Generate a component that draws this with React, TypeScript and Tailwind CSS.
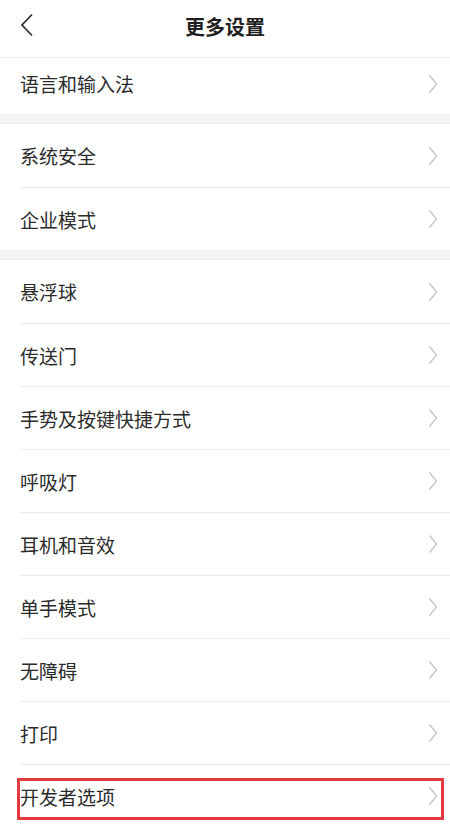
const groups: string[][] = [
  ['语言和输入法'],
  ['系统安全', '企业模式'],
  ['悬浮球', '传送门', '手势及按键快捷方式', '呼吸灯', '耳机和音效', '单手模式', '无障碍', '打印', '开发者选项'],
];

const font = { fontFamily: '"Noto Sans CJK SC", "Noto Sans", sans-serif' };

function Chevron() {
  return (
    <svg width="10" height="20" viewBox="0 0 10 20" fill="none" className="shrink-0">
      <path d="M1.5 1.5 L8.5 10 L1.5 18.5" stroke="#c4c4c4" strokeWidth="1.3" />
    </svg>
  );
}

function Row({ label, first, highlight, tall }: { label: string; first: boolean; highlight: boolean; tall: boolean }) {
  return (
    <div className={`relative pl-[20px] ${tall ? 'h-[63px]' : 'h-[56px] pb-[5px]'}`}>
      <div
        className={`flex h-full items-center justify-between pr-[12px] ${first ? '' : 'border-t border-[#ececec]'}`}
      >
        <span className="text-[19px] text-[#2b2b2b] leading-none">{label}</span>
        <Chevron />
      </div>
      {highlight && (
        <div className="absolute left-[17px] right-[6px] top-[14px] h-[42px] border-[3px] border-[#e23b40]" />
      )}
    </div>
  );
}

export default function App() {
  return (
    <div className="w-[450px] h-[827px] overflow-hidden bg-white" style={font}>
      <div className="relative flex h-[58px] items-center justify-center border-b border-[#ececec] pb-[4px]">
        <svg width="14" height="24" viewBox="0 0 14 24" fill="none" className="absolute left-[20px] top-[13px]">
          <path d="M12 1.5 L2 12 L12 22.5" stroke="#333" strokeWidth="1.8" />
        </svg>
        <h1 className="text-[20px] font-bold text-[#1f1f1f] leading-none">更多设置</h1>
      </div>
      {groups.map((g, gi) => (
        <div key={gi}>
          {gi > 0 && <div className="h-[10px] bg-[#f5f5f5] border-b border-[#ececec]" />}
          {g.map((label, i) => (
            <Row
              key={label}
              label={label}
              first={i === 0}
              tall={gi > 0}
              highlight={label === '开发者选项'}
            />
          ))}
        </div>
      ))}
    </div>
  );
}
